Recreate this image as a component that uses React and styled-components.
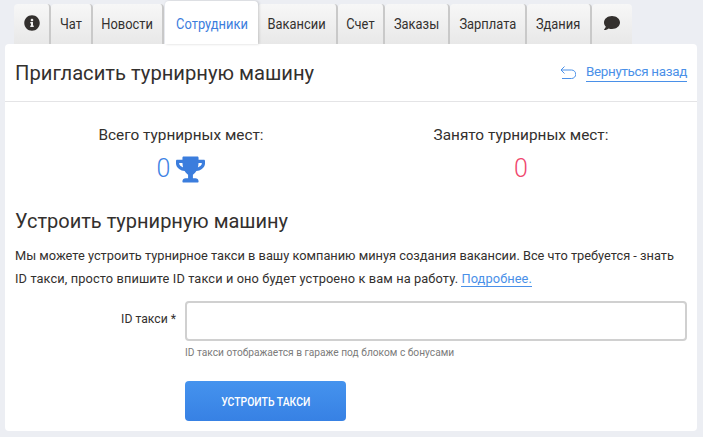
import React from "react";
import styled, { createGlobalStyle } from "styled-components";
import { FaInfoCircle, FaComment, FaTrophy } from "react-icons/fa";

const GlobalStyle = createGlobalStyle`
  html, body {
    margin: 0;
    padding: 0;
    background: #eceef3;
    height: 437px;
    overflow: hidden;
  }
  body {
    font-family: Roboto, "Noto Sans", sans-serif;
    color: #33302e;
  }
`;

const Page = styled.div`
  width: 703px;
  height: 437px;
  padding: 1px 6px 0 5px;
  box-sizing: border-box;
`;

const Tabs = styled.nav`
  display: flex;
  align-items: flex-end;
  height: 43px;
  padding-left: 9px;
`;

const Tab = styled.a`
  position: relative;
  z-index: ${(p) => (p.$active ? 2 : 0)};
  display: flex;
  align-items: center;
  justify-content: center;
  box-sizing: border-box;
  width: ${(p) => p.$w}px;
  height: ${(p) => (p.$active ? 43 : 40)}px;
  margin-left: ${(p) => (p.$active ? 1 : 0)}px;
  padding-top: ${(p) => (p.$active ? 3 : 0)}px;
  border-radius: 4px 4px 0 0;
  font-size: 14px;
  color: ${(p) => (p.$active ? "#3b7ddd" : "#33302e")};
  background: ${(p) =>
    p.$active ? "#fff" : "linear-gradient(#f7f7f7, #e8e8e8)"};
  border-right: ${(p) => (p.$active ? "0" : "2px solid #c9c9c9")};
  box-shadow: ${(p) => (p.$active ? "1px 0 3px rgba(0,0,0,.18)" : "none")};

  &:last-child {
    border-right: 0;
  }

  svg {
    margin-top: -2px;
  }
`;

/* the original face is condensed, so squeeze the label a bit */
const Narrow = styled.span`
  display: inline-block;
  white-space: nowrap;
  transform: scaleX(${(p) => p.$x});
`;

const Card = styled.main`
  position: relative;
  z-index: 1;
  background: #fff;
  width: 692px;
  height: 387px;
  border-radius: 4px;
  box-sizing: border-box;
`;

const Header = styled.header`
  display: flex;
  align-items: center;
  justify-content: space-between;
  height: 57px;
  padding: 0 10px;
  border-bottom: 1px solid #e4e4e6;
`;

const Title = styled.h1`
  margin: 0;
  font-size: 20.2px;
  font-weight: 400;
  color: #33302e;
`;

const Back = styled.a`
  display: flex;
  align-items: center;
  gap: 10px;
  font-size: 13.4px;
  letter-spacing: -0.3px;
  color: #4a90e8;
  span {
    border-bottom: 1px solid #4a90e8;
    line-height: 18px;
  }
`;

const Stats = styled.section`
  display: grid;
  grid-template-columns: 352px 328px;
  padding-top: 23px;
  height: 72px;
`;

const Stat = styled.div`
  display: flex;
  flex-direction: column;
  align-items: center;
  gap: 9px;
`;

const StatLabel = styled.div`
  font-size: 15.35px;
  line-height: 20px;
`;

const StatValue = styled.div`
  display: flex;
  align-items: center;
  gap: 6px;
  font-size: 25px;
  font-weight: 300;
  line-height: 30px;
  color: ${(p) => p.$color};
`;

const Body = styled.section`
  padding: 11px 10px 0;
`;

const Subtitle = styled.h2`
  margin: 0 0 10px;
  font-size: 20px;
  line-height: 26px;
  font-weight: 400;
`;

const Text = styled.p`
  margin: 0;
  font-size: 12.8px;
  line-height: 23px;
`;

const TextLine = styled.span`
  display: block;
  white-space: nowrap;
  letter-spacing: ${(p) => p.$spacing || 0}px;
`;

const More = styled.a`
  color: #4a90e8;
  border-bottom: 1px solid #4a90e8;
`;

const Form = styled.div`
  display: grid;
  grid-template-columns: 170px 502px;
  margin-top: 11px;
`;

const Label = styled.label`
  font-size: 12.2px;
  line-height: 36px;
  text-align: right;
  padding-right: 9px;
  box-sizing: border-box;
  height: 40px;
`;

const Input = styled.input`
  box-sizing: border-box;
  width: 502px;
  height: 40px;
  border: 2px solid #d0d0d0;
  border-radius: 4px;
  background: #fff;
  outline: none;
`;

const Hint = styled.div`
  grid-column: 2;
  font-size: 10.2px;
  line-height: 14px;
  margin-top: 5px;
  color: #7b7b7b;
`;

const Submit = styled.button`
  grid-column: 2;
  margin-top: 21px;
  width: 161px;
  height: 40px;
  border: 0;
  border-radius: 4px;
  background: linear-gradient(#4593ee, #3781e4);
  color: #fff;
  font-family: inherit;
  font-size: 13px;
  font-weight: 500;
  text-transform: uppercase;
`;

const tabs = [
  { w: 37, icon: <FaInfoCircle size={16} /> },
  { w: 42, label: "Чат" },
  { w: 71, label: "Новости" },
  { w: 93, label: "Сотрудники", active: true },
  { w: 80, label: "Вакансии" },
  { w: 47, label: "Счет" },
  { w: 65, label: "Заказы" },
  { w: 77, label: "Зарплата" },
  { w: 65, label: "Здания" },
  { w: 40, icon: <FaComment size={16} /> },
];

const BackIcon = () => (
  <svg width="16" height="14" viewBox="0 0 16 14" fill="none" stroke="#4a90e8" strokeWidth="1">
    <path d="M4.5 .5 1 4 4.5 7.5" />
    <path d="M1 4H11.5a3.8 3.8 0 0 1 0 8.5H2" />
  </svg>
);

const App = () => (
  <Page>
    <GlobalStyle />
    <Tabs>
      {tabs.map((t, i) => (
        <Tab key={i} $w={t.w} $active={t.active}>
          {t.icon || <Narrow $x={0.92}>{t.label}</Narrow>}
        </Tab>
      ))}
    </Tabs>
    <Card>
      <Header>
        <Title>Пригласить турнирную машину</Title>
        <Back>
          <BackIcon />
          <span>Вернуться назад</span>
        </Back>
      </Header>
      <Stats>
        <Stat>
          <StatLabel>Всего турнирных мест:</StatLabel>
          <StatValue $color="#3f83e4">
            0 <FaTrophy size={29} color="#3b7ddd" />
          </StatValue>
        </Stat>
        <Stat>
          <StatLabel>Занято турнирных мест:</StatLabel>
          <StatValue $color="#f0476f">0</StatValue>
        </Stat>
      </Stats>
      <Body>
        <Subtitle>Устроить турнирную машину</Subtitle>
        <Text>
          <TextLine>
            Мы можете устроить турнирное такси в вашу компанию минуя создания вакансии. Все что требуется - знать
          </TextLine>
          <TextLine $spacing={0.11}>
            ID такси, просто впишите ID такси и оно будет устроено к вам на работу. <More>Подробнее.</More>
          </TextLine>
        </Text>
        <Form>
          <Label>ID такси *</Label>
          <Input />
          <Hint>ID такси отображается в гараже под блоком с бонусами</Hint>
          <Submit>
            <Narrow $x={0.8}>Устроить такси</Narrow>
          </Submit>
        </Form>
      </Body>
    </Card>
  </Page>
);

export default App;
